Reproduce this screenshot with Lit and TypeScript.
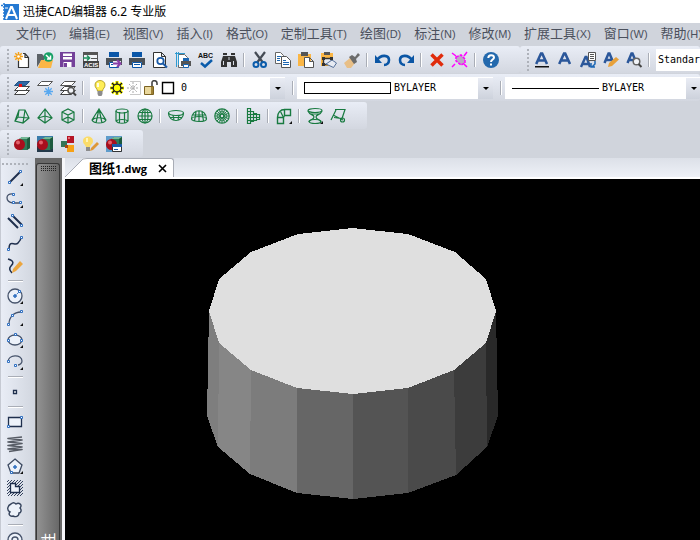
import { LitElement, html, svg, css, TemplateResult, SVGTemplateResult } from "lit";
import { customElement, property } from "lit/decorators.js";

type Art = SVGTemplateResult;

const printer = svg`<path fill="#4b5157" d="M0 6h16v7h-3v-3H3v3H0z"/><path fill="#fff" stroke="#0a56a8" d="M3.5 10.5h9v5h-9z"/><path fill="#0a56a8" d="M3 0h10v5H3zM5 12h6v1H5z"/>`;
const layers = svg`<path fill="#fff" stroke="#444" d="M4.500 10.500h11l-4 4H.5zM4.500 6.500h11l-4 4H.5z"/>`;
const letterA = svg`<path fill="none" stroke="#2b579a" stroke-width="2.600" d="M2.200 12L7 1.500h1.200L13 12M4.500 8.500h6.500"/>`;
const sphereCube = svg`<path fill="#2d7d5a" d="M5 3l3-2h8v11l-3 2H5z"/><path fill="#74b795" d="M5 3l3-2h8l-3 2z"/><path fill="#1c5a3e" d="M13 3l3-2v11l-3 2z"/><circle cx="5.500" cy="8.500" r="5.500" fill="#a80f1d"/><circle cx="4" cy="6.500" r="2" fill="#e2606a"/>`;
const fly = svg`<path fill="#111" stroke="none" d="M16 13v3h-3z"/>`;

const art: Record<string, Art> = {
  new: svg`<path fill="#fff" stroke="#333" stroke-width="1.200" d="M4.500 9v6.500h10V5.500L11 1.500H9M11 1.500v4h3.500"/><path stroke="#f5a11a" stroke-width="1.500" d="M4.500 0v9M0 4.500h9M1.300 1.300l6.400 6.400M7.700 1.300L1.300 7.700"/><circle cx="4.500" cy="4.500" r="1.300" fill="#fff"/>`,
  open: svg`<path fill="#5c6268" d="M0 15V2h5l2 2v5H4z"/><path fill="#fbb645" d="M4 8h12l-2 8H1z"/><circle cx="11.500" cy="5" r="4.800" fill="#16a066"/><path fill="none" stroke="#fff" stroke-width="1.500" d="M9 3l4 4M13.500 3.500V7H10"/>`,
  save: svg`<path fill="#74419a" d="M0 0h15v15H0z"/><path fill="#fff" d="M3 1.500h9v6H3zM3.500 10h8v5h-8z"/><path fill="#74419a" d="M4 11h3v4H4zM3 4h9v1H3z"/>`,
  acis: svg`<path fill="#f1f3f7" stroke="#555" d="M.5.500h14v15H.5z"/><path fill="#555" d="M0 0h15v3H0zM8 6h6v1H8z"/><path fill="none" stroke="#21915f" stroke-width="1.600" d="M0 6h6M4 3.500L6.500 6 4 8.500"/><path fill="#444" d="M0 9h16v7H0z"/><text x="1" y="15" font-size="6" font-weight="700" fill="#fff" font-family="Liberation Sans, sans-serif">ACIS</text>`,
  publish: svg`${printer}<path fill="none" stroke="#e9ecf3" stroke-width="4" d="M7 11h8"/><path fill="none" stroke="#8a3fa8" stroke-width="2" d="M7 11.500h7M11 8l3.500 3.500L11 15"/>`,
  print: printer,
  preview: svg`<path fill="#fff" stroke="#333" d="M1.500.5h8l4 4v11h-12zM9.500.500v4h4"/><circle cx="8.500" cy="9" r="3.200" fill="#fff" stroke="#1b5aa6" stroke-width="1.800"/><path stroke="#1b5aa6" stroke-width="2" d="M11 11.500l4 4"/>`,
  setup: svg`<path fill="#fff" stroke="#666" d="M3.500 2.500h6l3 3v10h-9z"/><path stroke="#2f9ad0" d="M0 1.500h10M1.500 0v15M3.500 0v13"/><path fill="#555" d="M6 9h10v5H6z"/><path fill="#1b66b3" d="M8 6h6v3H8z"/><path fill="#fff" stroke="#1b66b3" d="M8.500 12.500h5v3h-5z"/>`,
  spell: svg`<text x="0" y="6" font-size="7" font-weight="700" fill="#111" font-family="Liberation Sans, sans-serif">ABC</text><path fill="none" stroke="#0b5cab" stroke-width="2.500" d="M3 11l4 3.500L14 8"/>`,
  find: svg`<path fill="#333" d="M2 1h4v3h4V1h4v3l2 6v5h-6v-5H6v5H0v-5l2-6z"/><path stroke="#d6dae3" d="M2 3.500h4M10 3.500h4M2.500 9v4M8 5v3M12.500 9v4"/>`,
  cut: svg`<path stroke="#444b55" stroke-width="2.200" d="M3 0l7.500 10M13 0L5.500 10"/><circle cx="4" cy="12.500" r="2.500" fill="none" stroke="#0b5cab" stroke-width="2"/><circle cx="11.500" cy="12.500" r="2.500" fill="none" stroke="#0b5cab" stroke-width="2"/>`,
  copy: svg`<path fill="#fff" stroke="#666" d="M.5.500h5l3 3v8h-8z"/><path fill="#fff" stroke="#555" d="M6.500 4.500h5l4 4v7h-9z"/><path stroke="#1b66b3" d="M2 4.500h4M2 6.500h3M2 8.500h3M8 8.500h3M8 10.500h6M8 12.500h6"/>`,
  paste: svg`<path fill="#fbb645" d="M0 2h13v12H0z"/><path fill="#555" d="M3 0h7v4H3z"/><path fill="#fff" stroke="#555" d="M6.500 5.500h5l4 4v6h-9zM11.500 5.500v4h4"/>`,
  block: svg`<path fill="#fbb645" d="M0 1h12v13H0z"/><path fill="#555" d="M3 0h6v3H3z"/><path fill="#e7ebf3" stroke="#333" stroke-width="1.400" d="M2.500 6.500h8v6h-8z"/><path fill="#e7ebf3" stroke="#56719a" d="M5 12l6-4 4.500 3-3 4.500z"/><path fill="#333" d="M1 5h3v3H1zM9 5h3v3H9zM1 11h3v3H1z"/>`,
  match: svg`<path fill="#e8bf87" d="M0 11l6-5 5 5-4 5H3z"/><path fill="#6b6b6b" d="M5 5l3-2 3 2 3-4 2 2-4 4 1 3-3 2z"/>`,
  undo: svg`<path fill="none" stroke="#0b56a5" stroke-width="2.600" d="M2 8c4-6 12-5 12 0 0 3-2 5-5 5"/><path fill="#0b56a5" d="M0 3v8h7z"/>`,
  redo: svg`<path fill="none" stroke="#0b56a5" stroke-width="2.600" d="M14 8C10 2 2 3 2 8c0 3 2 5 5 5"/><path fill="#0b56a5" d="M16 3v8H9z"/>`,
  erase: svg`<path stroke="#e02c0c" stroke-width="3.500" d="M2.500 2.500l11 11M13.500 2.500l-11 11"/>`,
  explode: svg`<path fill="#b9a8c4" stroke="#f0f" stroke-width="1.500" stroke-dasharray="3 1" d="M4 5l5-2 4 4v4l-4 2-5-4z"/><path stroke="#f0f" stroke-width="1.500" d="M0 1l4 3M15 0l-3 4M0 15l3-3M15 15l-3-3"/>`,
  help: svg`<circle cx="8" cy="8" r="8" fill="#2469ad"/><path fill="none" stroke="#fff" stroke-width="2" d="M5.300 6c0-4 5.700-3.500 5.700-.5 0 2-3 2-3 4.500"/><path fill="#fff" d="M7 11.500h2v2H7z"/>`,
  style1: svg`${letterA}<path fill="#111" d="M1 14h14v1.500H1z"/>`,
  style2: letterA,
  style3: svg`<path fill="none" stroke="#2b579a" stroke-width="2.400" d="M1 15L5.500 5h1L10 15M3 12h6"/><path fill="#fff" stroke="#555" d="M8.500.500h7v8h-7zM10 2.500h4M10 4.500h4M10 6.500h4"/><path fill="none" stroke="#1b66b3" stroke-width="1.500" d="M15 9v3l-3 3M11 11v4h4"/>`,
  style4: svg`<path fill="none" stroke="#2b579a" stroke-width="2.500" d="M1.500 11L5.500 1.500h1L10.500 11M3.500 8h5"/><path fill="#e8a13a" d="M5 15l1-4 7-6 3 2.500-7 6.500z"/>`,
  style5: svg`<path fill="none" stroke="#2b579a" stroke-width="2.500" d="M1.500 11L5.500 1.500h1L10.500 11M3.500 8h5"/><circle cx="10.500" cy="9.500" r="3.300" fill="#f2f4f8" stroke="#666" stroke-width="1.500"/><path stroke="#444" stroke-width="2" d="M12.500 12l3 3"/>`,
  layer1: svg`${layers}<path fill="#2f69a5" stroke="#245283" d="M4.500 1.500h11l-4 4H.5z"/><path fill="#e11" d="M5 4h3v3H5z"/>`,
  layer2: svg`<path fill="#fff" stroke="#555" d="M4.500 1.500h11l-4 4H.5z"/><path stroke="#5aa9f0" stroke-width="1.300" d="M11.500 7v9M7 11.500h9M8.300 8.300l6.400 6.400M14.700 8.300l-6.400 6.400"/>`,
  layer3: svg`${layers}<path fill="#fff" stroke="#555" d="M4.500 1.500h11l-4 4H.5z"/><circle cx="11" cy="10.500" r="3" fill="#f2f4f8" stroke="#555" stroke-width="1.500"/><path stroke="#444" stroke-width="2" d="M13 12.500l3 3"/>`,
  bulb: svg`<path fill="#ffee58" stroke="#a69016" stroke-width=".8" d="M5.500 11C5 8 3 8 3 5c0-6 10-6 10 0 0 3-2 3-2.500 6z"/><path fill="#fffde0" d="M5 3h2v4H5z"/><path fill="#8c8c8c" d="M5.500 11h5v3l-1 2h-3l-1-2z"/>`,
  sun: svg`<path stroke="#ff0" stroke-width="3.500" d="M3 3l10 10M13 3L3 13M8 1v14M1 8h14"/><path stroke="#111" stroke-width="1.300" d="M3 3l10 10M13 3L3 13M8 1.500v13M1.500 8h13"/><circle cx="8" cy="8" r="3.800" fill="#ff0" stroke="#222" stroke-width="1.300"/>`,
  freeze: svg`<path fill="none" stroke="#c9c9c9" d="M4 1.500h10.500v13H4"/><path stroke="#aaa" stroke-dasharray="2 1" d="M7 2v12M1 8h12M3 4l8 8M11 4l-8 8"/>`,
  lock: svg`<path fill="none" stroke="#444" stroke-width="1.600" d="M9 8V2.500C9 0 14 0 14 3v2"/><path fill="#e9d79c" stroke="#7b6221" d="M1.500 6.500h9v8h-9z"/><path fill="#9f8134" d="M8 7h2v7H8z"/>`,
  swatch: svg`<path fill="#fff" stroke="#000" stroke-width="1.400" d="M2.500 2.500h11v11h-11z"/>`,
  wedge: svg`<path d="M1 13L5 2h6l4 8-6 5zM5 2l-1 7-3 4M4 9l11 1M11 2L9 15"/>`,
  pyramid: svg`<path d="M8 1L1 10l7 5 7-5zM8 1v14M1 10l7-2 7 2"/>`,
  box: svg`<path d="M2 4l6-3 6 3v8l-6 3-6-3zM2 4l6 3 6-3M8 7v8M2 12l6-3 6 3"/>`,
  cone: svg`<path d="M8 1L1 12c2 4 12 4 14 0zM8 1L5 15M8 1l3 14M1 12c3-3 11-3 14 0"/>`,
  cylinder: svg`<ellipse cx="8" cy="3" rx="6" ry="2"/><path d="M2 3v10c2 3 10 3 12 0V3M2 13c2-2 10-2 12 0M5.500 4v11M10.500 4v11"/>`,
  sphere: svg`<circle cx="8" cy="8" r="7"/><ellipse cx="8" cy="8" rx="3" ry="7"/><path d="M1 8h14M8 1v14M2 4.500h12M2 11.500h12"/>`,
  dish: svg`<ellipse cx="8" cy="5" rx="7.500" ry="2.500"/><path d="M.5 5c0 10 15 10 15 0M5 7l1 5M11 7l-1 5M2 9.500h12"/>`,
  dome: svg`<ellipse cx="8" cy="11" rx="7.500" ry="2.500"/><path d="M.5 11c0-11 15-11 15 0M8 3v10M5 4L3.500 13M11 4l1.500 9M2 7h12"/>`,
  torus: svg`<circle cx="8" cy="8" r="7.200"/><circle cx="8" cy="8" r="4.800" stroke-width=".7"/><circle cx="8" cy="8" r="2" stroke-width="1.600"/><path stroke-width=".9" d="M8 1v5M8 10v5M1 8h5M10 8h5M3 3l3.500 3.500M9.500 9.500L13 13M13 3L9.500 6.500M6.500 9.500L3 13M5.300 1.500L7.200 6M8.800 10l1.900 4.500M10.700 1.500L8.800 6M7.200 10l-1.900 4.500M1.500 5.300L6 7.200M10 8.800l4.500 1.900M14.500 5.300L10 7.200M6 8.800l-4.500 1.900"/>`,
  mesh: svg`<path d="M2.500.5h3v15h-3zM5.500 3.500h3v10h-3M8.500 5.500h3v7h-3M11.500 6.500h3v5h-3M2.500 3.500h3M2.500 6.500h9M2.500 9.500h12M2.500 12.500h6"/>`,
  surface: svg`<path stroke-width="1.400" d="M1.500 9.500h6v6h-6zM8.500 1.500h6v6h-6zM1.500 9.500c0-5 3-8 7-8M7.500 9.500l1-2"/><path d="M4.500 3.500l3 6"/>`,
  revolve: svg`<ellipse cx="8" cy="2.500" rx="7" ry="2"/><ellipse cx="8" cy="13.500" rx="6" ry="2"/><path d="M1 3c2 5 6 3 6 6s-4 2-5 5M15 3c-2 5-6 3-6 6s4 2 5 5M4 6h8"/>`,
  ruled: svg`<path d="M5 1.500h10l-3 9-8-1M1 12l5-10M3 7l10 5"/><circle cx="12.500" cy="12" r="2"/>`,
  solid1: sphereCube,
  solid2: svg`<path fill="#3a7cab" d="M0 0h16v16H0z"/><path fill="#23394a" d="M0 10h16v6H0z"/>${sphereCube}`,
  solid3: svg`<path fill="#b51525" d="M7 0h7v7H7z"/><path fill="#347556" d="M1 5h6v6H1z"/><path fill="#f7a115" d="M7 9h7v7H7z"/><path fill="#e4707a" d="M8 1h2v2H8z"/><path fill="#a8480f" d="M5 9h3v3H5z"/>`,
  solid4: svg`<path fill="#fbdc69" d="M3 11C2 8 0 8 0 5c0-6 10-6 10 0 0 3-2 3-3 6z"/><path fill="#fff4b8" d="M3 2h2v4H3z"/><path fill="#8c8c8c" d="M3 11h4v4H3z"/><path fill="#de9736" d="M7 15l1-3 6-6 2 2-6 6z"/>`,
  solid5: svg`<path fill="#5e9ccb" d="M0 0h16v16H0z"/>${sphereCube}<path fill="#fff" stroke="#333" d="M6.500 8.500h9v7h-9z"/><path fill="#1b5aa6" d="M6 8h10v3H6zM8 13h4v1H8z"/>`,
};

const N = "#1f2f4d";
const node = (x: number, y: number) => svg`<path fill="#fff" stroke="#2f6fc0" d="M${x - 1} ${y - 1}h2v2h-2z"/>`;
const draw: Record<string, Art> = {
  line: svg`<path stroke="${N}" stroke-width="2" d="M2 13L13 2"/>${node(2.5, 12.5)}${node(13.5, 1.5)}${fly}`,
  pline: svg`<path fill="none" stroke="#46536b" stroke-width="1.300" d="M6 2C-2 1-2 10 6 11h8"/>${node(6.5, 2.5)}${node(6.5, 10.5)}${node(13.5, 10.5)}${fly}`,
  mline: svg`<path stroke="${N}" stroke-width="2" d="M5 1l10 10M1 4l10 10"/>${node(5.5, 1.5)}${node(14.5, 11.5)}`,
  spline: svg`<path fill="none" stroke="${N}" stroke-width="1.500" d="M2 14C2 2 8 11 11 7c2-2 3-3 3-6"/>${node(1.5, 13.5)}${node(14.5, 1.5)}`,
  sketch: svg`<path fill="none" stroke="${N}" stroke-width="1.500" d="M1 1c7 2 5 5 3 7s-2 4 1 7"/><path fill="#eba640" d="M5 15l1-4 7-8 3 3-7 7z"/>`,
  circle: svg`<circle cx="8" cy="8" r="7" fill="#edf2fa" stroke="#46536b" stroke-width="1.300"/><path stroke="#2f6fc0" stroke-dasharray="2 1" d="M8 8l4-4"/><path stroke="#2f6fc0" stroke-width="1.500" d="M6 8h4M8 6v4"/>${node(12.5, 3.5)}${fly}`,
  arc: svg`<path fill="none" stroke="#46536b" stroke-width="1.300" d="M2 14C2 7 7 2 14 2"/>${node(1.5, 14.5)}${node(5.5, 5.500)}${node(14.5, 1.5)}${fly}`,
  ellipse: svg`<ellipse cx="8" cy="8" rx="7" ry="5" fill="#edf2fa" stroke="#46536b" stroke-width="1.300"/>${node(8.5, 2.5)}${node(1.5, 8.5)}${node(14.5, 8.500)}${fly}`,
  earc: svg`<path fill="none" stroke="#46536b" stroke-width="1.300" d="M1 8C1 0 15 0 15 7c0 2-2 4-4 4"/>${node(1.5, 7.5)}${node(8.5, 11.5)}${fly}`,
  point: svg`<path fill="#fff" stroke="${N}" stroke-width="1.300" d="M6.500 6.500h3v3h-3z"/>`,
  rect: svg`<path fill="#edf2fa" stroke="${N}" stroke-width="1.300" d="M1.500 3.500h13v9h-13z"/>${node(1.5, 12.5)}${node(14.5, 3.5)}`,
  helix: svg`<path fill="none" stroke="#565b64" stroke-width="1.700" stroke-linejoin="round" d="M15 1L1 2.500 15 4 1 6l14 1.500L1 9.500 15 11 1 13l14 .5-13 2"/>`,
  polygon: svg`<path fill="#edf2fa" stroke="#3d4a61" stroke-width="1.300" d="M8 1l7 6-3 8H4L1 7z"/><path stroke="#2f6fc0" stroke-width="1.500" d="M6 9h4M8 7v4"/>${node(4.5, 14.5)}${fly}`,
  hatch: svg`<path stroke="${N}" stroke-width=".9" d="M0 2l2-2M0 5l5-5M0 8l8-8M0 11L11 0M0 14L14 0M1 16L16 1M4 16L16 4M7 16l9-9M10 16l6-6M13 16l3-3"/><path fill="#edf2fa" stroke="${N}" stroke-width="1.300" d="M3.500 3.500h5v3h4v6h-9z"/>`,
  cloud: svg`<path fill="#edf2fa" stroke="#35435c" stroke-width="1.400" d="M4 2c2-2 4-1 5 0 3-2 7 1 4 4 2 2 1 5-1 5 0 4-4 4-6 3-3 1-5-2-3-4-4-2-2-7 1-8z"/>`,
  donut: svg`<circle cx="8" cy="8" r="7" fill="#edf2fa" stroke="#46536b" stroke-width="1.400"/><circle cx="8" cy="8" r="3" fill="none" stroke="#46536b" stroke-width="1.400"/>`,
};

@customElement("cad-tool")
class CadTool extends LitElement {
  @property() label = "";
  @property({ type: Boolean }) green = false;
  @property({ type: Boolean }) flyout = false;
  @property({ attribute: false }) art: Art = svg``;
  static styles = css`
    :host { display: block; flex: none; }
    button { display: grid; place-items: center; width: 23px; height: 22px; padding: 0; border: 0; background: none; }
    svg { display: block; overflow: visible; fill: none; }
    .green { stroke: #187a40; stroke-width: 1.2; }
  `;
  render(): TemplateResult {
    return html`<button aria-label=${this.label} title=${this.label}>
      <svg width="16" height="16" viewBox="0 0 16 16"><g class=${this.green ? "green" : ""}>${this.art}</g>${this.flyout ? fly : ""}</svg>
    </button>`;
  }
}

const menus = [["文件", "F"], ["编辑", "E"], ["视图", "V"], ["插入", "I"], ["格式", "O"], ["定制工具", "T"], ["绘图", "D"], ["标注", "N"], ["修改", "M"], ["扩展工具", "X"], ["窗口", "W"], ["帮助", "H"]];
const standard = "new open save acis publish print preview setup spell find | cut copy paste block match | undo redo | erase explode | help".split(" ");
const text = "style1 style2 style3 style4 style5 |".split(" ");
const layerTools = "layer1 layer2 layer3 |".split(" ");
const meshes = "wedge pyramid box | cone cylinder sphere | dish dome torus | mesh | surface | revolve ruled".split(" ");
const solids = "solid1 solid2 solid3 solid4 solid5".split(" ");
const drawing = "line pline mline spline sketch | circle arc ellipse earc | point | rect helix polygon hatch cloud | donut".split(" ");

const rim = [[209, 311], [219, 343], [251, 370], [297, 388], [353, 394], [408, 388], [454, 370], [486, 343], [496, 311]];
const base = [[207, 416], [218, 447], [250, 474], [297, 493], [353, 499], [408, 493], [456, 475], [487, 447], [498, 416]];
const back = [[486, 279], [455, 252], [408, 234], [352, 228], [298, 234], [251, 252], [219, 279]];
const shades = ["#7e7e7e", "#868686", "#7c7c7c", "#666", "#545454", "#4a4a4a", "#3c3c3c", "#292929"];

@customElement("app-root")
class AppRoot extends LitElement {
  static styles = css`
    :host { display: flex; flex-direction: column; height: 100vh; overflow: hidden; background: #d0d4dc; color: #000; font: 12px/16px "Noto Sans", "Noto Sans CJK SC", sans-serif; }
    * { box-sizing: border-box; }
    button, select { font: inherit; color: inherit; border: 0; background: none; padding: 0; }
    header { display: flex; flex: none; align-items: center; gap: 4px; height: 23px; padding: 0 1px; background: #fff; white-space: nowrap; }
    h1 { margin: 0; font-size: 12px; font-weight: 400; }
    nav { display: flex; flex: none; align-items: center; gap: 13px; height: 23px; padding: 0 16px 2px; color: #4b505c; overflow: hidden; }
    nav button { flex: none; font: 13px/20px "Noto Sans CJK SC", sans-serif; white-space: nowrap; }
    nav span { font: 11px/20px "Liberation Sans", sans-serif; }
    .row { display: flex; flex: none; height: 28px; }
    .bar { display: flex; flex: none; align-items: center; height: 27px; padding: 1px 18px 0 0; border-radius: 3px; background: linear-gradient(#e9edf6, #d3d7e0); }
    .bar.grow { flex: 1; min-width: 0; padding-right: 0; overflow: hidden; }
    .grip { flex: none; width: 2px; height: 22px; margin: 0 1px 0 7px; background: repeating-linear-gradient(#aeb2ba 0 2px, transparent 2px 4px); }
    .sep { flex: none; width: 2px; height: 14px; margin: 0 3px; background: linear-gradient(90deg, #a9adb6 50%, #fff 50%); }
    .combo { display: flex; flex: none; align-items: center; height: 22px; margin-right: 4px; background: #fff; }
    .combo svg { flex: none; display: block; }
    .combo select { appearance: none; flex: 1; min-width: 0; height: 22px; font: 10px/22px "DejaVu Sans Mono", monospace; }
    .arrow { flex: none; width: 15px; height: 21px; display: grid; place-items: center; background: linear-gradient(#e9ecf4, #cdd2dc); }
    .arrow::after { content: ""; border: 3px solid transparent; border-top-color: #000; border-bottom: 0; }
    .layer { width: 195px; margin-left: 3px; padding-left: 2px; gap: 1px; }
    .layer select { padding-left: 4px; }
    .color { width: 196px; padding-left: 7px; gap: 3px; }
    .type { width: 196px; padding-left: 7px; gap: 3px; }
    .style { width: 120px; margin: 0 0 0 3px; padding-left: 2px; }
    .chip { flex: none; width: 87px; height: 12px; border: 1px solid #000; }
    .stroke { flex: none; width: 87px; height: 1px; background: #000; }
    main { display: flex; flex: 1; min-height: 0; }
    .tools { display: flex; flex: none; flex-direction: column; align-items: center; width: 35px; padding: 5px 6px 0 0; overflow: hidden; border-left: 1px solid #c6cad3; background: linear-gradient(90deg, #e9edf6, #d1d6df); }
    .vgrip { flex: none; width: 26px; height: 2px; margin-bottom: 2px; background: repeating-linear-gradient(90deg, #aeb2ba 0 2px, transparent 2px 4px); }
    .hsep { flex: none; width: 15px; height: 2px; margin: 3px 0; background: linear-gradient(#a9adb6 50%, #fff 50%); }
    .dock { flex: none; display: flex; width: 27px; padding: 5px 2px 0 1px; background: #686868; }
    .panel { flex: 1; display: flex; flex-direction: column; align-items: center; justify-content: space-between; border: 1px solid #383838; border-bottom: 0; border-radius: 3px 3px 0 0; background: linear-gradient(90deg, #929292, #686868); overflow: hidden; }
    .dots { width: 16px; height: 5px; margin-top: 2px; background: repeating-conic-gradient(#222 0 25%, transparent 0 100%) 0 0 / 2px 2px; }
    .panel b { flex: none; width: 16px; height: 8px; font: 400 15px/16px "Noto Sans CJK SC", sans-serif; color: #fff; }
    .panel i { display: block; width: 16px; height: 16px; text-align: center; font-style: normal; transform: rotate(-90deg); }
    .work { flex: 1; min-width: 0; display: flex; flex-direction: column; border-left: 3px solid #f6f7fa; background: #000; }
    .tabs { flex: none; display: flex; height: 21px; border-bottom: 2px solid #fff; background: linear-gradient(#dce0e8, #eef1f7); }
    .slope { flex: none; display: block; }
    .tab { display: flex; align-items: center; gap: 8px; padding: 0 4px 0 2px; border: 1px solid #a9adb6; border-width: 1px 1px 0 0; border-radius: 0 3px 0 0; background: #fff; white-space: nowrap; }
    .tab b { font: 700 13px/18px "Noto Sans CJK SC", sans-serif; }
    .tab b span { font: 700 11px/18px "Open Sans", sans-serif; }
    .tab button { width: 14px; height: 16px; display: grid; place-items: center; }
    .view { flex: 1; width: 100%; min-height: 0; display: block; background: #000; }
  `;

  private tools(names: string[], green = false) {
    return names.map((n) => n === "|"
      ? html`<div class="sep"></div>`
      : html`<cad-tool label=${n} ?green=${green} ?flyout=${n === "surface" || n === "revolve"} .art=${art[n]}></cad-tool>`);
  }

  private icon(n: string) {
    return html`<svg width="16" height="16" viewBox="0 0 16 16" fill="none">${art[n]}</svg>`;
  }

  private combo(kind: string, label: string, value: string, lead: unknown) {
    return html`<div class="combo ${kind}">${lead}<select aria-label=${label}><option>${value}</option></select><span class="arrow"></span></div>`;
  }

  render() {
    const pts = (p: number[][]) => p.map((q) => q.join(",")).join(" ");
    return html`
      <header>
        <svg width="18" height="18" viewBox="0 0 18 18"><path fill="#2579d2" d="M3 1h15v16H3z"/><path stroke="#2579d2" stroke-width="1.500" stroke-dasharray="2 1" d="M0 2.500h7M3 0v17"/><path fill="none" stroke="#fff" stroke-width="2" d="M5 16l5-12h1l5 12M7 12h7"/><path stroke="#fff" d="M4 5h3"/></svg>
        <h1>迅捷CAD编辑器 6.2 专业版</h1>
      </header>
      <nav>${menus.map(([name, key]) => html`<button>${name}<span>(${key})</span></button>`)}</nav>
      <div class="row">
        <div class="bar"><div class="grip"></div>${this.tools(standard)}</div>
        <div class="bar grow"><div class="grip"></div>${this.tools(text)}${this.combo("style", "Text style", "Standard", "")}</div>
      </div>
      <div class="row">
        <div class="bar grow"><div class="grip"></div>${this.tools(layerTools)}
          ${this.combo("layer", "Layer", "0", ["bulb", "sun", "freeze", "lock", "swatch"].map((n) => this.icon(n)))}
          <div class="sep"></div>
          ${this.combo("color", "Colour", "BYLAYER", html`<span class="chip"></span>`)}
          <div class="sep"></div>
          ${this.combo("type", "Line type", "BYLAYER", html`<span class="stroke"></span>`)}
        </div>
      </div>
      <div class="row"><div class="bar"><div class="grip"></div>${this.tools(meshes, true)}</div></div>
      <div class="row"><div class="bar"><div class="grip"></div>${this.tools(solids)}</div></div>
      <main>
        <div class="tools"><div class="vgrip"></div>
          ${drawing.map((n) => n === "|" ? html`<div class="hsep"></div>` : html`<cad-tool label=${n} .art=${draw[n]}></cad-tool>`)}
        </div>
        <aside class="dock"><div class="panel"><div class="dots"></div><b><i>性</i></b></div></aside>
        <section class="work">
          <div class="tabs">
            <svg class="slope" width="22" height="19" viewBox="0 0 22 19"><path fill="#fff" d="M0 19L19 0h3v19z"/><path fill="none" stroke="#a9adb6" d="M0 19L18 1l4-.5"/></svg>
            <div class="tab"><b>图纸<span>1.dwg</span></b>
              <button aria-label="Close"><svg width="9" height="9" viewBox="0 0 9 9"><path stroke="#000" stroke-width="1.600" d="M1 1l7 7M8 1L1 8"/></svg></button>
            </div>
          </div>
          <svg class="view" viewBox="65 179 635 361" shape-rendering="crispEdges">
            ${shades.map((c, i) => svg`<polygon fill=${c} points=${pts([rim[i], rim[i + 1], base[i + 1], base[i]])}/>`)}
            <polygon fill="#dfdfdf" points=${pts([...rim, ...back])}/>
          </svg>
        </section>
      </main>`;
  }
}
